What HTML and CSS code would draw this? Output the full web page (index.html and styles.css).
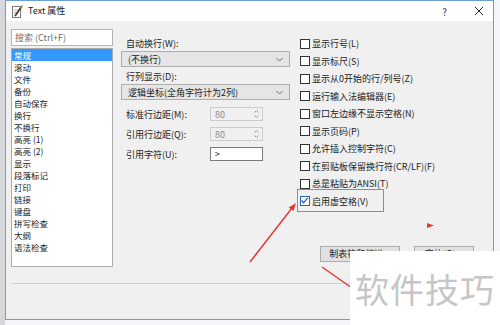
FILE: index.html
```html
<!DOCTYPE html>
<html lang="zh-CN">
<head>
  <meta charset="UTF-8">
  <meta name="viewport" content="width=device-width, initial-scale=1.0">
  <title>Text 属性</title>
  <link rel="stylesheet" href="styles.css">
</head>
<body>
  <div class="dialog">
    <!-- Title bar -->
    <div class="titlebar">
      <svg class="app-icon" width="11" height="13" viewBox="0 0 11 13">
        <rect x="0.5" y="1.5" width="8" height="11" fill="#fff" stroke="#7a7a7a"/>
        <line x1="2" y1="5" x2="6" y2="5" stroke="#b0b0b0"/>
        <line x1="2" y1="7.5" x2="5" y2="7.5" stroke="#b0b0b0"/>
        <line x1="3" y1="11" x2="10" y2="1" stroke="#4a3a2a" stroke-width="1.8"/>
        <line x1="9" y1="2.4" x2="10.4" y2="0.4" stroke="#d9a441" stroke-width="1.8"/>
      </svg>
      <span class="title">Text 属性</span>
      <span class="help">?</span>
      <svg class="close" width="10" height="10" viewBox="0 0 10 10">
        <path d="M1 1 L9 9 M9 1 L1 9" stroke="#222" stroke-width="1"/>
      </svg>
    </div>

    <div class="body">
      <div class="columns">
        <!-- Page list -->
        <div class="sidebar">
          <div class="search">搜索 (Ctrl+F)</div>
          <ul class="pages">
            <li class="selected">常规</li>
            <li>滚动</li>
            <li>文件</li>
            <li>备份</li>
            <li>自动保存</li>
            <li>换行</li>
            <li>不换行</li>
            <li>高亮 (1)</li>
            <li>高亮 (2)</li>
            <li>显示</li>
            <li>段落标记</li>
            <li>打印</li>
            <li>链接</li>
            <li>键盘</li>
            <li>拼写检查</li>
            <li>大纲</li>
            <li>语法检查</li>
          </ul>
        </div>

        <div class="main">
          <div class="panes">
            <!-- Left options -->
            <div class="options">
              <div class="label">自动换行(W):</div>
              <div class="select">
                <span>(不换行)</span>
                <svg width="7" height="5" viewBox="0 0 7 5"><path d="M0.5 1 L3.5 4 L6.5 1" fill="none" stroke="#666"/></svg>
              </div>
              <div class="label label-gap">行列显示(D):</div>
              <div class="select">
                <span>逻辑坐标(全角字符计为2列)</span>
                <svg width="7" height="5" viewBox="0 0 7 5"><path d="M0.5 1 L3.5 4 L6.5 1" fill="none" stroke="#666"/></svg>
              </div>
              <div class="field-row first">
                <span class="field-label">标准行边距(M):</span>
                <div class="spin">
                  <span>80</span>
                  <svg width="5" height="10" viewBox="0 0 5 10"><path d="M0.5 3.5 L2.5 1.5 L4.5 3.5 M0.5 6.5 L2.5 8.5 L4.5 6.5" fill="none" stroke="#999"/></svg>
                </div>
              </div>
              <div class="field-row">
                <span class="field-label">引用行边距(Q):</span>
                <div class="spin">
                  <span>80</span>
                  <svg width="5" height="10" viewBox="0 0 5 10"><path d="M0.5 3.5 L2.5 1.5 L4.5 3.5 M0.5 6.5 L2.5 8.5 L4.5 6.5" fill="none" stroke="#999"/></svg>
                </div>
              </div>
              <div class="field-row">
                <span class="field-label">引用字符(U):</span>
                <div class="text-input">&gt;</div>
              </div>
            </div>

            <!-- Right checkboxes -->
            <div class="checks">
              <label class="check"><span class="box"></span>显示行号(L)</label>
              <label class="check"><span class="box"></span>显示标尺(S)</label>
              <label class="check"><span class="box"></span>显示从0开始的行/列号(Z)</label>
              <label class="check"><span class="box"></span>运行输入法编辑器(E)</label>
              <label class="check"><span class="box"></span>窗口左边缘不显示空格(N)</label>
              <label class="check"><span class="box"></span>显示页码(P)</label>
              <label class="check"><span class="box"></span>允许插入控制字符(C)</label>
              <label class="check"><span class="box"></span>在剪贴板保留换行符(CR/LF)(F)</label>
              <label class="check"><span class="box"></span>总是粘贴为ANSI(T)</label>
              <label class="check"><span class="box checked"><svg width="9" height="9" viewBox="0 0 9 9"><path d="M1.5 4.5 L3.5 6.8 L7.8 1.8" fill="none" stroke="#1f5fbf" stroke-width="1.3"/></svg></span>启用虚空格(V)</label>
            </div>
          </div>

          <div class="actions">
            <button class="btn btn-wide">制表符和缩进...</button>
            <button class="btn btn-small">字体(O)...</button>
          </div>
        </div>
      </div>

      <div class="separator"></div>
      <div class="footer"></div>
    </div>
  </div>

  <!-- Annotations -->
  <svg class="marks" width="500" height="325" viewBox="0 0 500 325">
    <rect x="297.5" y="189.5" width="86" height="22" fill="none" stroke="#e06a6a" stroke-width="1"/>
    <line x1="250" y1="262" x2="292" y2="208" stroke="#e53935" stroke-width="1.5"/>
    <polygon points="296,203 293.5,211.1 288.7,207.5" fill="#e53935"/>
    <line x1="322" y1="267" x2="362" y2="295" stroke="#e53935" stroke-width="1.5"/>
    <polygon points="427,223 434,225.5 427,228" fill="#e53935"/>
  </svg>
  <div class="watermark">软件技巧</div>
</body>
</html>
```

FILE: styles.css
```css
body {
  margin: 0;
  width: 500px;
  height: 325px;
  overflow: hidden;
  position: relative;
  background: linear-gradient(90deg, #d6d8db 0, #d6d8db 5px, #f3f5f8 5px);
  font-family: "Noto Sans CJK SC", "Noto Sans", sans-serif;
  font-size: 9px;
  color: #222;
}
.dialog {
  margin-left: 5px;
  width: 487px;
  height: 318px;
  border: 1px solid #6a9fd4;
  background: #f0f0f0;
  display: flex;
  flex-direction: column;
}
.titlebar {
  height: 20px;
  background: #fff;
  display: flex;
  align-items: center;
  padding-left: 6px;
}
.app-icon {
  margin-right: 5px;
}
.title {
  flex: 1;
  line-height: 12px;
}
.help {
  font-size: 10px;
  margin-right: 27px;
  color: #333;
}
.close {
  margin-right: 9px;
}
.body {
  flex: 1;
  display: flex;
  flex-direction: column;
  padding-top: 8px;
}
.columns {
  height: 238px;
  display: flex;
  padding-left: 5px;
  gap: 8px;
}
.sidebar {
  width: 102px;
  display: flex;
  flex-direction: column;
  gap: 2px;
}
.search {
  height: 15px;
  line-height: 15px;
  border: 1px solid #b4b4b4;
  background: #fff;
  color: #707070;
  padding-left: 3px;
}
.pages {
  flex: 1;
  margin: 0;
  padding: 0;
  list-style: none;
  border: 1px solid #acacac;
  background: #fff;
}
.pages li {
  height: 12px;
  line-height: 12px;
  padding-left: 2px;
  font-size: 8.5px;
}
.pages li.selected {
  background: #3399ff;
  color: #fff;
}
.main {
  flex: 1;
  display: flex;
  flex-direction: column;
  padding-right: 19px;
  padding-bottom: 5px;
}
.panes {
  display: flex;
  gap: 9px;
}
.options {
  width: 169px;
  padding-top: 9px;
  display: flex;
  flex-direction: column;
}
.label {
  height: 12px;
  line-height: 12px;
  padding-left: 5px;
  margin-bottom: 1px;
}
.label-gap {
  margin-top: 4px;
}
.select {
  height: 14px;
  border: 1px solid #adadad;
  background: #e5e5e5;
  display: flex;
  align-items: center;
  justify-content: space-between;
  padding: 0 6px 0 6px;
}
.field-row {
  height: 14px;
  display: flex;
  align-items: center;
  margin-top: 6px;
}
.field-row.first {
  margin-top: 7px;
}
.field-label {
  width: 84px;
  padding-left: 5px;
}
.spin {
  width: 51px;
  height: 12px;
  border: 1px solid #cccccc;
  background: #f0f0f0;
  color: #8c8c8c;
  display: flex;
  align-items: center;
  justify-content: space-between;
  padding: 0 3px 0 4px;
  box-sizing: content-box;
  width: 44px;
}
.text-input {
  width: 47px;
  height: 12px;
  line-height: 12px;
  border: 1px solid #7a7a7a;
  background: #fff;
  padding-left: 4px;
}
.checks {
  flex: 1;
  padding-top: 6px;
  display: flex;
  flex-direction: column;
}
.check {
  height: 17.5px;
  display: flex;
  align-items: center;
  padding-left: 1px;
}
.box {
  width: 8px;
  height: 8px;
  border: 1px solid #333;
  background: #fff;
  margin-right: 2px;
  display: flex;
}
.box.checked {
  border-color: #2b65b8;
}
.box.checked svg {
  margin: -1px 0 0 -1px;
}
.actions {
  margin-top: auto;
  display: flex;
  justify-content: flex-end;
  gap: 14px;
}
.btn {
  height: 16px;
  padding: 0;
  border: 1px solid #adadad;
  background: #e1e1e1;
  font-family: inherit;
  font-size: 9px;
  color: #222;
  line-height: 14px;
}
.btn-wide {
  width: 80px;
}
.btn-small {
  width: 60px;
}
.separator {
  margin: 16px 5px 0 5px;
  height: 1px;
  background: #d2d2d2;
}
.footer {
  flex: 1;
}
.marks {
  position: absolute;
  left: 0;
  top: 0;
  pointer-events: none;
}
.watermark {
  position: absolute;
  left: 350px;
  top: 251px;
  width: 145px;
  height: 53px;
  padding: 21px 0 0 5px;
  background: #fff;
  color: #c6c6c6;
  font-size: 34px;
  line-height: 34px;
  letter-spacing: 1px;
}
```
